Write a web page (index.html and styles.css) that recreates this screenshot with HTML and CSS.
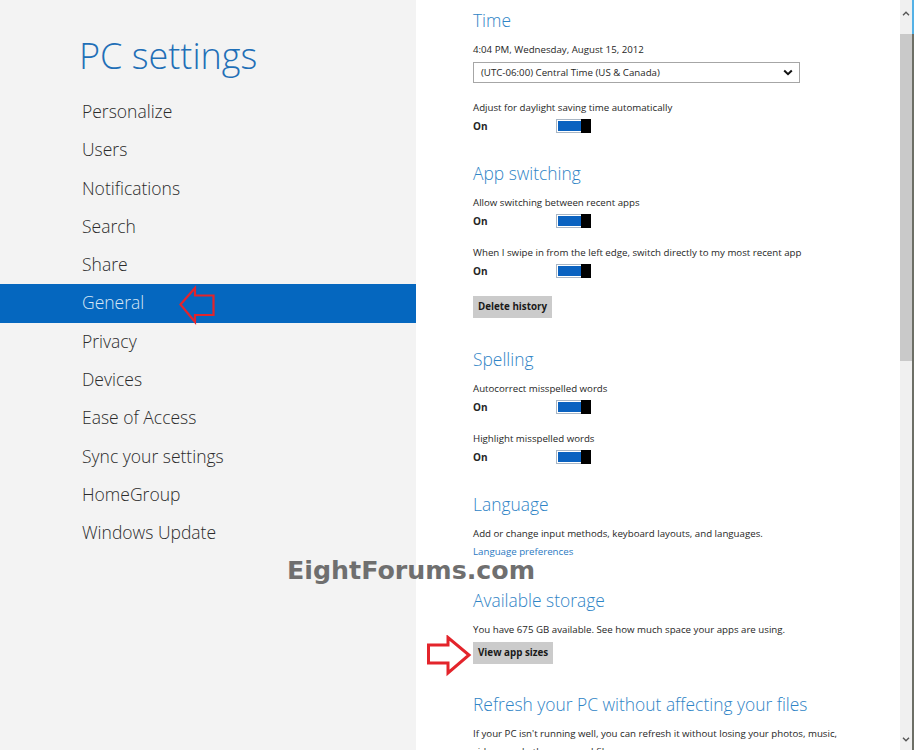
FILE: index.html
```html
<!DOCTYPE html>
<html lang="en">
<head>
<meta charset="utf-8">
<title>PC settings</title>
<link rel="stylesheet" href="styles.css">
</head>
<body>
<div class="screen">
  <aside class="nav">
    <h1 class="title">PC settings</h1>
    <ul class="menu">
      <li>Personalize</li>
      <li>Users</li>
      <li>Notifications</li>
      <li>Search</li>
      <li>Share</li>
      <li class="active">General
        <svg class="arrow-left" width="38" height="40" viewBox="0 0 38 40"><polygon points="1.5,19.5 16,3 16,10.5 34.5,10.5 34.5,30 16,30 16,37" fill="none" stroke="#e3242b" stroke-width="2.2" stroke-linejoin="miter"/></svg>
      </li>
      <li>Privacy</li>
      <li>Devices</li>
      <li>Ease of Access</li>
      <li>Sync your settings</li>
      <li>HomeGroup</li>
      <li>Windows Update</li>
    </ul>
  </aside>

  <main class="content">
    <section class="sec sec-first">
      <h2>Time</h2>
      <div class="line">4:04 PM, Wednesday, August 15, 2012</div>
      <div class="select">
        <span>(UTC-06:00) Central Time (US &amp; Canada)</span>
        <svg width="10" height="7" viewBox="0 0 10 7"><polyline points="1.2,1.5 5,5.2 8.8,1.5" fill="none" stroke="#111" stroke-width="2"/></svg>
      </div>
      <div class="setting setting-after-select">
        <div class="line">Adjust for daylight saving time automatically</div>
        <div class="onrow"><span class="on">On</span><span class="toggle"><span class="fill"></span><span class="thumb"></span></span></div>
      </div>
    </section>

    <section class="sec sec-b">
      <h2>App switching</h2>
      <div class="setting">
        <div class="line">Allow switching between recent apps</div>
        <div class="onrow"><span class="on">On</span><span class="toggle"><span class="fill"></span><span class="thumb"></span></span></div>
      </div>
      <div class="setting setting-next">
        <div class="line">When I swipe in from the left edge, switch directly to my most recent app</div>
        <div class="onrow"><span class="on">On</span><span class="toggle"><span class="fill"></span><span class="thumb"></span></span></div>
      </div>
      <div class="btn btn-delete">Delete history</div>
    </section>

    <section class="sec sec-c">
      <h2>Spelling</h2>
      <div class="setting">
        <div class="line">Autocorrect misspelled words</div>
        <div class="onrow"><span class="on">On</span><span class="toggle"><span class="fill"></span><span class="thumb"></span></span></div>
      </div>
      <div class="setting setting-next">
        <div class="line">Highlight misspelled words</div>
        <div class="onrow"><span class="on">On</span><span class="toggle"><span class="fill"></span><span class="thumb"></span></span></div>
      </div>
    </section>

    <section class="sec sec-b">
      <h2>Language</h2>
      <div class="line">Add or change input methods, keyboard layouts, and languages.</div>
      <div class="line link">Language preferences</div>
    </section>

    <section class="sec sec-d">
      <h2>Available storage</h2>
      <div class="line">You have 675 GB available. See how much space your apps are using.</div>
      <div class="btn btn-sizes">View app sizes</div>
    </section>

    <section class="sec sec-e">
      <h2>Refresh your PC without affecting your files</h2>
      <div class="line">If your PC isn't running well, you can refresh it without losing your photos, music,<br>videos, and other personal files.</div>
    </section>
  </main>

  <div class="scrollbar">
    <div class="sb-btn sb-up"><svg width="8" height="5" viewBox="0 0 8 5"><polyline points="1,4.2 4,1.2 7,4.2" fill="none" stroke="#555" stroke-width="1.4"/></svg></div>
    <div class="sb-thumb"></div>
    <div class="sb-track"></div>
    <div class="sb-btn sb-down"><svg width="8" height="5" viewBox="0 0 8 5"><polyline points="1,0.8 4,3.8 7,0.8" fill="none" stroke="#555" stroke-width="1.4"/></svg></div>
  </div>
  <div class="edge"></div>

  <div class="watermark">EightForums.com</div>
  <svg class="arrow-right" width="46" height="42" viewBox="0 0 46 42"><polygon points="2.5,10 22,10 22,2.5 43,20 22,38 22,28 2.5,28" fill="none" stroke="#e3242b" stroke-width="3" stroke-linejoin="miter"/></svg>
</div>
</body>
</html>
```

FILE: styles.css
```css
* { box-sizing: border-box; }
html, body {
  margin: 0;
  padding: 0;
  width: 914px;
  height: 750px;
  overflow: hidden;
  background: #ffffff;
}
.screen {
  position: relative;
  display: flex;
  width: 914px;
  height: 750px;
  overflow: hidden;
  font-family: "Open Sans", "Noto Sans", sans-serif;
}

/* left navigation */
.nav {
  width: 416px;
  flex: none;
  background: #f3f3f3;
  padding-top: 34px;
}
.title {
  margin: 0 0 15px 0;
  padding-left: 79px;
  font-size: 36px;
  line-height: 44px;
  font-weight: 300;
  color: #1f6fb7;
}
.menu {
  list-style: none;
  margin: 0;
  padding: 0;
}
.menu li {
  position: relative;
  height: 38.3px;
  line-height: 37px;
  padding-left: 82px;
  font-size: 17.5px;
  font-weight: 300;
  color: #2b2b2b;
}
.menu li.active {
  background: #0567bf;
  color: #d6e6f5;
}
.arrow-left {
  position: absolute;
  left: 179px;
  top: 1px;
}

/* right content */
.content {
  width: 484px;
  flex: none;
  padding: 8px 0 0 57px;
  background: #ffffff;
  color: #262626;
}
.sec h2 {
  margin: 0 0 9px 0;
  font-size: 17.4px;
  line-height: 24px;
  font-weight: 300;
  color: #2f84c6;
  white-space: nowrap;
}
.sec-b { margin-top: 26px; }
.sec-c { margin-top: 29px; }
.sec-d { margin-top: 27px; }
.sec-e { margin-top: 28px; }

.line {
  font-size: 9.7px;
  line-height: 18px;
  white-space: nowrap;
}
.link { color: #2a79c2; }

.select {
  margin-top: 3px;
  width: 327px;
  height: 21px;
  border: 1px solid #a6a6a6;
  display: flex;
  align-items: center;
  justify-content: space-between;
  padding: 0 6px 0 7px;
  font-size: 9.7px;
}
.select svg { display: block; }

.setting-after-select { margin-top: 16px; }
.setting-next { margin-top: 14px; }

.onrow {
  height: 18px;
  display: flex;
  align-items: center;
}
.on {
  width: 83px;
  font-size: 10px;
  font-weight: 700;
}
.toggle {
  position: relative;
  width: 35px;
  height: 14px;
  margin-top: -1px;
  border: 1px solid #a9b6c4;
  background: #ffffff;
  padding: 1px 9px 1px 1px;
  display: block;
}
.toggle .fill {
  display: block;
  width: 100%;
  height: 100%;
  background: #0a62c0;
}
.toggle .thumb {
  position: absolute;
  right: -1px;
  top: -1px;
  bottom: -1px;
  width: 10px;
  background: #000000;
}

.btn {
  display: inline-block;
  height: 22px;
  line-height: 22px;
  padding: 0 5px;
  background: #cbcbcb;
  font-size: 9.8px;
  font-weight: 700;
  color: #1a1a1a;
}
.btn-delete { margin-top: 16px; }
.btn-sizes { margin-top: 3px; }

/* scrollbar */
.scrollbar {
  width: 12px;
  flex: none;
  background: #f0f0f0;
  display: flex;
  flex-direction: column;
}
.sb-btn {
  display: flex;
  justify-content: center;
}
.sb-up { align-items: flex-start; padding-top: 11px; height: 34px; }
.sb-down { align-items: flex-end; padding-bottom: 8px; height: 24px; }
.sb-thumb {
  height: 327px;
  background: #c9c9c9;
}
.sb-track { flex: 1; }
.edge {
  width: 2px;
  flex: none;
  background: linear-gradient(to bottom, #54b1e6 0, #54b1e6 34px, #6d6f66 34px, #6d6f66 100%);
}

/* annotations */
.watermark {
  position: absolute;
  left: 287px;
  top: 556px;
  font-family: "DejaVu Sans", sans-serif;
  font-weight: 700;
  font-size: 25.3px;
  line-height: 30px;
  color: #6f6f6f;
  white-space: nowrap;
}
.arrow-right {
  position: absolute;
  left: 426px;
  top: 635px;
}
```
